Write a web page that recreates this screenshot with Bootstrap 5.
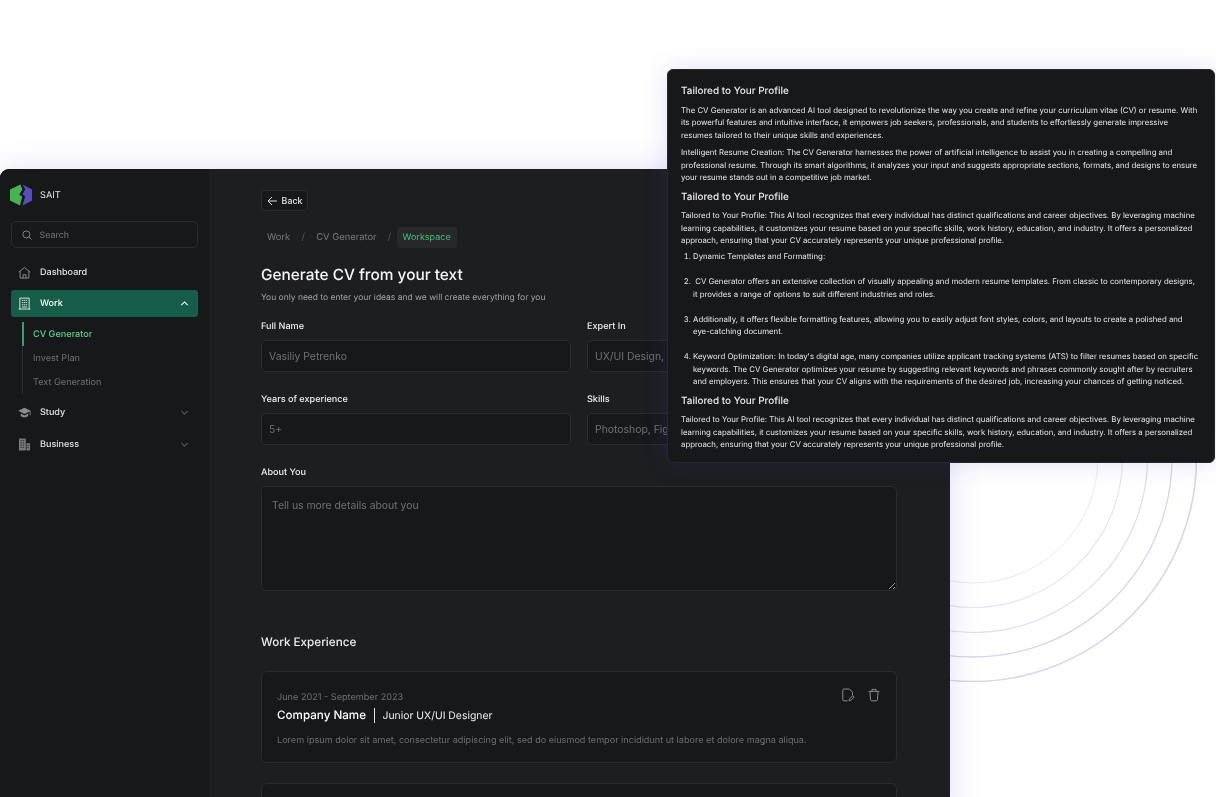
<!DOCTYPE html>
<html lang="en">
<head>
    <meta charset="UTF-8">
    <meta name="viewport" content="width=device-width, initial-scale=1">
    <title>SAIT - Generate CV</title>
    <link href="https://cdn.jsdelivr.net/npm/bootstrap@5.3.0/dist/css/bootstrap.min.css" rel="stylesheet">
    <style>
        :root {
            --line: #2a2c30;
            --field: #17181a;
            --muted: #76787d;
        }

        html, body {
            height: 100%;
        }

        body {
            position: relative;
            overflow: hidden;
            background: #fff;
            font-family: Inter, "Liberation Sans", sans-serif;
            text-rendering: geometricPrecision;
            color: #f4f4f5;
        }

        /* rings behind the window */
        .rings {
            position: absolute;
            left: 749px;
            top: 234px;
        }

        .app-window {
            position: absolute;
            left: 0;
            top: 169px;
            width: 950px;
            height: 660px;
            display: flex;
            overflow: hidden;
            background: #1d1e20;
            border-top-left-radius: 9px;
            box-shadow: 0 0 32px rgba(80, 70, 200, .16);
            will-change: transform;
        }

        /* sidebar */
        .side {
            width: 209px;
            flex: none;
            background: #17181a;
            padding: 15px 11px 0 11px;
        }

        .brand {
            height: 22px;
            font-size: 9.2px;
            margin-left: -1px;
            color: #e6e6e8;
        }

        .brand span {
            padding-top: 2px;
        }

        .search-box {
            height: 27px;
            margin-top: 15px;
            margin-bottom: 11px;
            padding-left: 10px;
            gap: 7.5px;
            font-size: 8.9px;
            color: var(--muted);
            border: 1px solid var(--line);
            border-radius: 5px;
        }

        .search-box span {
            padding-top: 2px;
        }

        .menu-item {
            height: 27px;
            margin-bottom: 5px;
            padding: 0 9px 0 7px;
            gap: 9px;
            font-size: 9.05px;
            font-weight: 500;
            color: #e4e4e6;
            border-radius: 3px;
        }

        .menu-item.first-item {
            margin-bottom: 4px;
        }

        .menu-item.on {
            background: #165c4a;
            color: #fff;
        }

        .menu-label {
            flex: 1;
            padding-top: 1px;
        }

        .submenu {
            margin: 0 0 5px 11px;
            padding-left: 0;
            height: 72px;
            border-left: 1px solid #2c2e32;
            font-size: 9.15px;
            color: #6e7075;
        }

        .submenu div {
            height: 24px;
            line-height: 25px;
            padding-left: 9px;
            margin-left: -1px;
            border-left: 2px solid transparent;
        }

        .submenu div.on {
            color: #5fd08a;
            font-weight: 500;
            border-left-color: #3f9d68;
        }

        /* main column */
        .main-col {
            flex: 1;
            padding: 21px 53px 0 52px;
        }

        .back-btn {
            width: 47px;
            height: 21px;
            padding: 0;
            gap: 4px;
            font-size: 8.8px;
            font-weight: 500;
            color: #e8e8ea;
            background: #17181a;
            border: 1px solid var(--line);
            border-radius: 4px;
        }

        .crumbs {
            margin-top: 16px;
            font-size: 9.4px;
            color: #77797e;
        }

        .crumbs span {
            height: 21px;
            line-height: 21px;
        }

        .crumb-part {
            padding: 0 6px;
        }

        .crumb-sep {
            width: 14px;
            text-align: center;
            color: #55575b;
        }

        .crumb-now {
            padding: 0 6px;
            font-size: 9px;
            color: #45c274;
            background: #26282b;
            border-radius: 3px;
        }

        .page-title {
            margin: 16px 0 0;
            font-size: 15.4px;
            line-height: 22px;
            font-weight: 500;
            color: #f6f6f7;
        }

        .page-sub {
            margin: 6px 0 0;
            font-size: 8.47px;
            line-height: 13px;
            color: #a3a4a8;
        }

        .field-label {
            display: block;
            margin: 0 0 7px;
            font-size: 9.1px;
            line-height: 13px;
            font-weight: 500;
            color: #eeeeef;
        }

        .field-box.form-control {
            height: 32px;
            padding: 0 7px;
            font-size: 10.4px;
            color: #e8e8ea;
            background-color: var(--field);
            border: 1px solid var(--line);
            border-radius: 5px;
            box-shadow: none;
        }

        .field-box.form-control::placeholder {
            color: #6f7176;
            opacity: 1;
        }

        textarea.field-box.form-control {
            height: 105px;
            padding: 11px 10px 0;
        }

        .form-rows {
            margin-top: 15px;
            display: grid;
            grid-template-columns: 310px 310px;
            column-gap: 16px;
            row-gap: 21px;
        }

        .span-two {
            grid-column: 1 / 3;
        }

        .section-title {
            margin: 43px 0 0;
            font-size: 11.7px;
            line-height: 16px;
            font-weight: 500;
            color: #eeeeef;
        }

        .job-card {
            margin-top: 21px;
            height: 92px;
            padding: 19px 15px 0 15px;
            background: var(--field);
            border: 1px solid var(--line);
            border-radius: 6px;
        }

        .job-card + .job-card {
            margin-top: 20px;
        }

        .job-date {
            font-size: 9.15px;
            line-height: 12px;
            padding-top: 1px;
            color: #6d6f74;
        }

        .job-head {
            margin-top: 4px;
            height: 15px;
            gap: 7.5px;
            font-size: 10.4px;
            line-height: 15px;
            color: #ececee;
        }

        .job-head b {
            font-size: 11.65px;
            font-weight: 500;
            color: #fff;
        }

        .job-bar {
            width: 1.5px;
            height: 15px;
            background: #e6e6e8;
        }

        .job-text {
            margin: 11px 0 0;
            font-size: 9.1px;
            line-height: 13px;
            color: #6d6f74;
        }

        .job-tools {
            gap: 12px;
            margin-top: -3px;
        }

        /* floating result panel */
        .result-panel {
            position: absolute;
            left: 667px;
            top: 69px;
            width: 548px;
            height: 394px;
            padding: 14px 13px 0;
            background: #17181a;
            border: 1px solid #26282b;
            border-radius: 6px;
            box-shadow: 0 0 26px rgba(80, 70, 200, .16);
            font-size: 7.8px;
            line-height: 12.5px;
            color: #e8e8ea;
            will-change: transform;
        }

        .result-panel h6 {
            margin: 5.75px 0;
            font-size: 9.95px;
            line-height: 14px;
            font-weight: 500;
            color: #ececee;
        }

        .result-panel h6:first-child {
            margin-top: 0;
        }

        .result-panel p {
            margin: 0 0 5px;
        }

        .result-panel ol {
            margin: -1.5px 0 5.75px;
            padding-left: 12px;
        }

        .result-panel li {
            margin-bottom: 12.5px;
        }

        .result-panel li:last-child {
            margin-bottom: 0;
        }
    </style>
</head>
<body>
    <svg class="rings" width="448" height="448" viewBox="0 0 448 448" fill="none" stroke="#d5d5f0">
        <circle cx="224" cy="224" r="125" stroke="#e9e9f8"/>
        <circle cx="224" cy="224" r="149.5" stroke="#e2e2f5" stroke-width="1.1"/>
        <circle cx="224" cy="224" r="174.5" stroke="#dddcf4" stroke-width="1.2"/>
        <circle cx="224" cy="224" r="199" stroke-width="1.3"/>
        <circle cx="224" cy="224" r="223.5" stroke-width="1.6"/>
    </svg>

    <div class="app-window">
        <aside class="side">
            <div class="brand d-flex align-items-center gap-2">
                <svg width="22" height="22" viewBox="0 0 22 22">
                    <path fill="#46b254" d="M10.4.4 0 5.6v10.8l10 5.2 2.2-9.2-3-1.6 3.2-5.2z"/>
                    <path fill="#5a4cc0" d="M12.6.4 22 5.6v10.8l-9.4 5.2 2.6-9.4-2.8-1.8 2.8-5.2z"/>
                </svg>
                <span>SAIT</span>
            </div>

            <div class="search-box d-flex align-items-center">
                <svg width="10" height="10" viewBox="0 0 12 12" fill="none" stroke="#8a8c91" stroke-width="1.1">
                    <circle cx="5.3" cy="5.3" r="4.2"/><path d="m8.4 8.4 3 3"/>
                </svg>
                <span>Search</span>
            </div>

            <div class="menu-item first-item d-flex align-items-center">
                <svg width="13" height="13" viewBox="0 0 14 14" fill="none" stroke="#9a9ca0" stroke-width=".9">
                    <path d="M.8 6.6 7 1.6l6.2 5M2.3 5.6V13h9.4V5.6M5.4 13V9.4h3.2V13"/>
                </svg>
                <span class="menu-label">Dashboard</span>
            </div>

            <div class="menu-item on d-flex align-items-center">
                <svg width="13" height="13" viewBox="0 0 14 14" fill="none" stroke="#fff" stroke-width=".9">
                    <path d="M2 13V1.2h10V13M.6 13h12.8M4.2 3.6h1.6M6.4 3.6h1.4M8.4 3.6h1.4M4.2 6h1.6M6.4 6h1.4M8.4 6h1.4M4.2 8.4h1.6M6.4 8.4h1.4M8.4 8.4h1.4M4.2 10.8h5.6"/>
                </svg>
                <span class="menu-label">Work</span>
                <svg width="9" height="9" viewBox="0 0 10 10" fill="none" stroke="#fff" stroke-width="1.2"><path d="m1.5 6.8 3.5-3.5 3.5 3.5"/></svg>
            </div>

            <div class="submenu">
                <div class="on">CV Generator</div>
                <div>Invest Plan</div>
                <div>Text Generation</div>
            </div>

            <div class="menu-item d-flex align-items-center">
                <svg width="13" height="13" viewBox="0 0 14 14">
                    <path fill="#8a8c90" d="M7 2 .2 5.2 7 8.6l5.6-2.8V10h.9V5.2z"/>
                    <path fill="#8a8c90" d="M3 8.2v2.6c1 1 2.5 1.4 4 1.4s3-.4 4-1.4V8.2L7 10.2z"/>
                </svg>
                <span class="menu-label">Study</span>
                <svg width="9" height="9" viewBox="0 0 10 10" fill="none" stroke="#808287" stroke-width="1"><path d="m1.5 3.3 3.5 3.5 3.5-3.5"/></svg>
            </div>

            <div class="menu-item d-flex align-items-center">
                <svg width="13" height="13" viewBox="0 0 14 14">
                    <path fill="#77797e" d="M1 .6h7.4V13.4H1z"/>
                    <path fill="#77797e" d="M9.2 5.6H13v7.8H9.2z"/>
                    <path stroke="#17181a" stroke-width=".8" d="M2.6 2.8h1.6M5 2.8h1.6M2.6 5.2h1.6M5 5.2h1.6M2.6 7.6h1.6M5 7.6h1.6M2.6 10h1.6M5 10h1.6M10.2 8h1.6M10.2 10.4h1.6"/>
                </svg>
                <span class="menu-label">Business</span>
                <svg width="9" height="9" viewBox="0 0 10 10" fill="none" stroke="#808287" stroke-width="1"><path d="m1.5 3.3 3.5 3.5 3.5-3.5"/></svg>
            </div>
        </aside>

        <main class="main-col">
            <button class="back-btn btn d-flex align-items-center justify-content-center" type="button">
                <svg width="11" height="10" viewBox="0 0 11 10" fill="none" stroke="#d8d8da" stroke-width="1"><path d="M10 5H1.2M5 1 1 5l4 4"/></svg>
                Back
            </button>

            <div class="crumbs d-flex align-items-center">
                <span class="crumb-part">Work</span>
                <span class="crumb-sep">/</span>
                <span class="crumb-part">CV Generator</span>
                <span class="crumb-sep">/</span>
                <span class="crumb-now">Workspace</span>
            </div>

            <h1 class="page-title">Generate CV from your text</h1>
            <p class="page-sub">You only need to enter your ideas and we will create everything for you</p>

            <form class="form-rows">
                <div>
                    <label class="field-label" for="fullName">Full Name</label>
                    <input class="field-box form-control" id="fullName" type="text" placeholder="Vasiliy Petrenko">
                </div>
                <div>
                    <label class="field-label" for="expert">Expert In</label>
                    <input class="field-box form-control" id="expert" type="text" placeholder="UX/UI Design, Product Design">
                </div>
                <div>
                    <label class="field-label" for="years">Years of experience</label>
                    <input class="field-box form-control" id="years" type="text" placeholder="5+">
                </div>
                <div>
                    <label class="field-label" for="skills">Skills</label>
                    <input class="field-box form-control" id="skills" type="text" placeholder="Photoshop, Figma, Sketch">
                </div>
                <div class="span-two">
                    <label class="field-label" for="about">About You</label>
                    <textarea class="field-box form-control" id="about" placeholder="Tell us more details about you"></textarea>
                </div>
            </form>

            <h2 class="section-title">Work Experience</h2>

            <div class="job-card d-flex justify-content-between">
                <div>
                    <div class="job-date">June 2021 - September 2023</div>
                    <div class="job-head d-flex align-items-center">
                        <b>Company Name</b>
                        <span class="job-bar"></span>
                        <span>Junior UX/UI Designer</span>
                    </div>
                    <p class="job-text">Lorem ipsum dolor sit amet, consectetur adipiscing elit, sed do eiusmod tempor incididunt ut labore et dolore magna aliqua.</p>
                </div>
                <div class="job-tools d-flex align-items-start">
                    <svg width="14" height="14" viewBox="0 0 14 14" fill="none" stroke="#8a8c90" stroke-width="1">
                        <path d="M6.5 12.8H3a1.2 1.2 0 0 1-1.2-1.2V2.2A1.2 1.2 0 0 1 3 1h4.8c.3 0 .6.1.8.3l2.6 2.6c.2.2.3.5.3.8v2.4"/>
                        <path d="m8 12.8.4-1.8 3.4-3.4 1.4 1.4-3.4 3.4z"/>
                    </svg>
                    <svg width="14" height="14" viewBox="0 0 14 14" fill="none" stroke="#8a8c90" stroke-width="1">
                        <path d="M1.6 3.4h10.8M5 3.4V1.4h4v2M3 3.4l.5 8.2c0 .7.5 1.2 1.2 1.2h4.6c.7 0 1.2-.5 1.2-1.2l.5-8.2"/>
                    </svg>
                </div>
            </div>

            <div class="job-card"></div>
        </main>
    </div>

    <section class="result-panel">
        <h6>Tailored to Your Profile</h6>
        <p>The CV Generator is an advanced AI tool designed to revolutionize the way you create and refine your curriculum vitae (CV) or resume. With its powerful features and intuitive interface, it empowers job seekers, professionals, and students to effortlessly generate impressive resumes tailored to their unique skills and experiences.</p>
        <p>Intelligent Resume Creation: The CV Generator harnesses the power of artificial intelligence to assist you in creating a compelling and professional resume. Through its smart algorithms, it analyzes your input and suggests appropriate sections, formats, and designs to ensure your resume stands out in a competitive job market.</p>
        <h6>Tailored to Your Profile</h6>
        <p>Tailored to Your Profile: This AI tool recognizes that every individual has distinct qualifications and career objectives. By leveraging machine learning capabilities, it customizes your resume based on your specific skills, work history, education, and industry. It offers a personalized approach, ensuring that your CV accurately represents your unique professional profile.</p>
        <ol>
            <li>Dynamic Templates and Formatting:</li>
            <li>&nbsp;CV Generator offers an extensive collection of visually appealing and modern resume templates. From classic to contemporary designs, it provides a range of options to suit different industries and roles.</li>
            <li>Additionally, it offers flexible formatting features, allowing you to easily adjust font styles, colors, and layouts to create a polished and eye-catching document.</li>
            <li>Keyword Optimization: In today's digital age, many companies utilize applicant tracking systems (ATS) to filter resumes based on specific keywords. The CV Generator optimizes your resume by suggesting relevant keywords and phrases commonly sought after by recruiters and employers. This ensures that your CV aligns with the requirements of the desired job, increasing your chances of getting noticed.</li>
        </ol>
        <h6>Tailored to Your Profile</h6>
        <p>Tailored to Your Profile: This AI tool recognizes that every individual has distinct qualifications and career objectives. By leveraging machine learning capabilities, it customizes your resume based on your specific skills, work history, education, and industry. It offers a personalized approach, ensuring that your CV accurately represents your unique professional profile.</p>
    </section>

    <script src="https://cdn.jsdelivr.net/npm/bootstrap@5.3.0/dist/js/bootstrap.bundle.min.js"></script>
</body>
</html>
